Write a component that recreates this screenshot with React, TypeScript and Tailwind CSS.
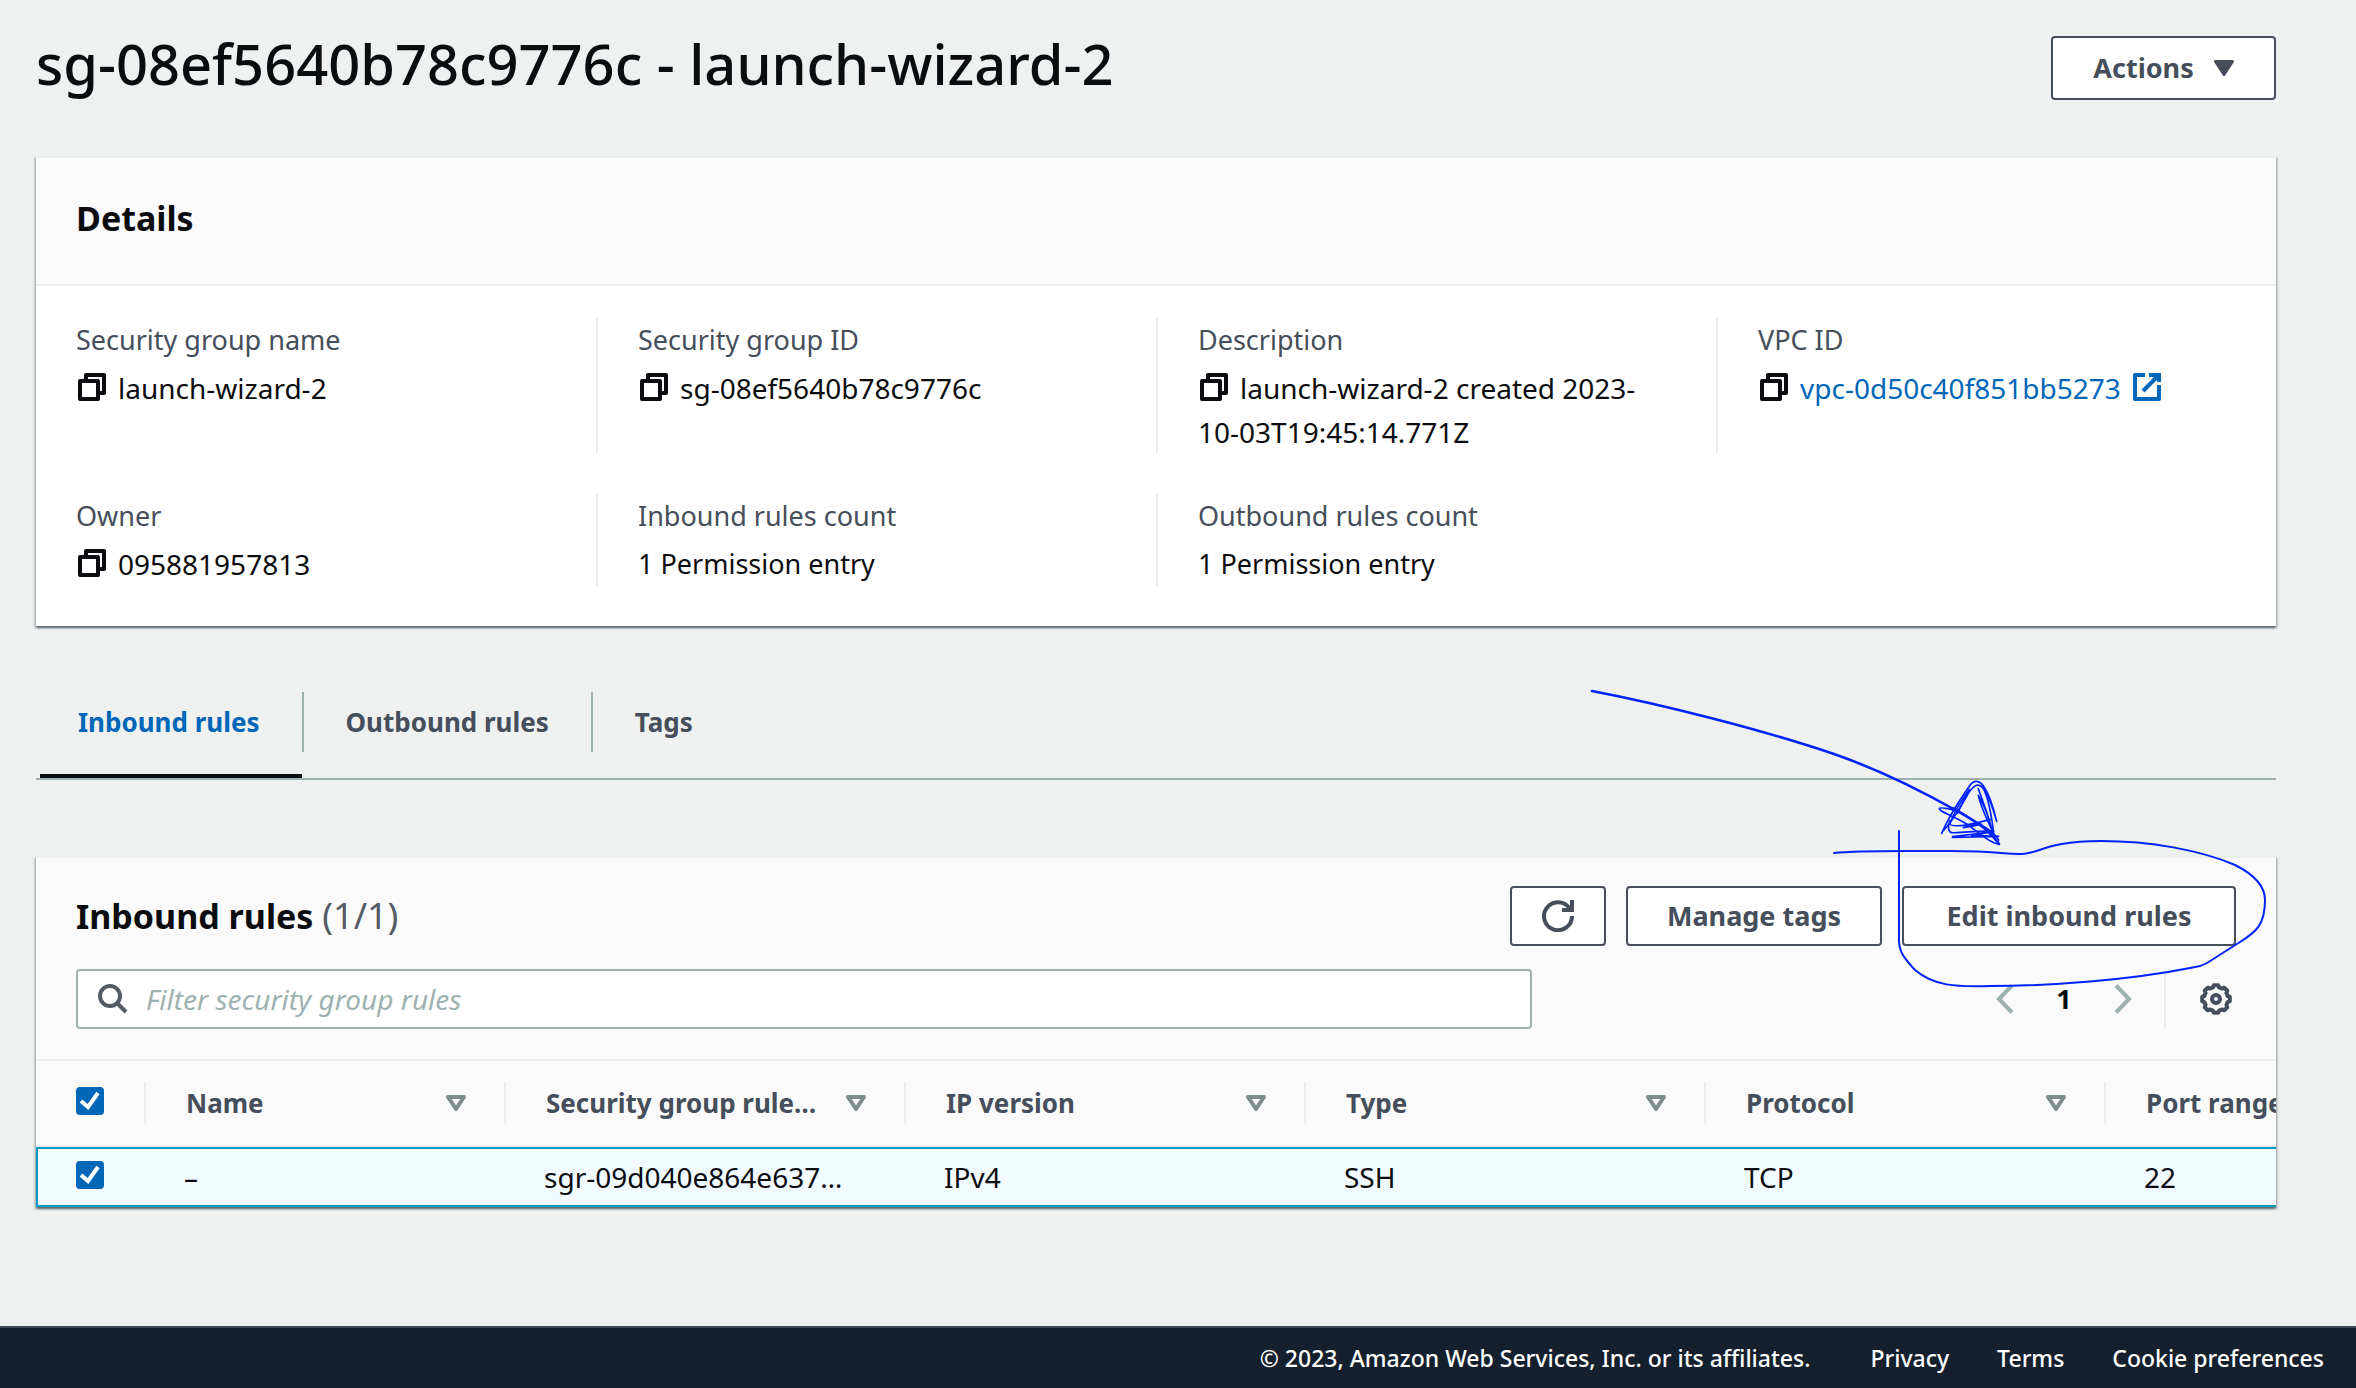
import type { ReactNode } from 'react';

function CopyIcon() {
  return (
    <svg viewBox="0 0 28 28" className="size-7" fill="none" stroke="currentColor" strokeWidth="4" strokeLinejoin="round" aria-hidden="true">
      <path d="M2 8H20V26H2Z" />
      <path d="M8 7V2H26V20H21" />
    </svg>
  );
}

function CopyButton({ label }: { label: string }) {
  return (
    <button type="button" aria-label={`Copy ${label}`} className="mr-3 ml-0.5 inline-block align-[-2px] text-[#0b0c0f]">
      <CopyIcon />
    </button>
  );
}

function ExternalIcon() {
  return (
    <svg viewBox="0 0 28 28" className="ml-3 inline-block size-7 align-[-2px]" fill="none" stroke="currentColor" strokeWidth="4" aria-hidden="true">
      <path d="M12 2H2V26H26V12" strokeLinejoin="round" />
      <path d="M16 2H26V9M10 18L26 2" />
    </svg>
  );
}

function RefreshIcon() {
  return (
    <svg viewBox="0 0 32 32" className="size-8" fill="none" stroke="currentColor" strokeWidth="4" aria-hidden="true">
      <path d="M30 16A14 14 0 1 1 27 7.500L28.500 9.500" />
      <path d="M30 0V10H20" />
    </svg>
  );
}

function SearchIcon() {
  return (
    <svg viewBox="0 0 30 30" className="size-[30px] shrink-0 text-[#545b64]" fill="none" stroke="currentColor" strokeWidth="4" aria-hidden="true">
      <circle cx="12" cy="12" r="10" />
      <path d="M19 19L28 28" />
    </svg>
  );
}

function Chevron({ side }: { side: 'left' | 'right' }) {
  return (
    <svg viewBox="0 0 18 30" className="h-[30px] w-[18px]" fill="none" stroke="currentColor" strokeWidth="4" aria-hidden="true">
      <path d={side === 'left' ? 'M16 1.500L3 15L16 28.500' : 'M2 1.500L15 15L2 28.500'} />
    </svg>
  );
}

const gearPath = (() => {
  const points: string[] = [];
  for (let i = 0; i < 8; i++) {
    for (const [offset, radius] of [[-9, 14], [9, 14], [15, 12], [30, 12]]) {
      const a = ((i * 45 + offset) * Math.PI) / 180;
      points.push(`${(16 + radius * Math.sin(a)).toFixed(2)} ${(16 - radius * Math.cos(a)).toFixed(2)}`);
    }
  }
  return `M${points.join('L')}Z`;
})();

function GearIcon() {
  return (
    <svg viewBox="0 0 32 32" className="size-8" fill="none" stroke="currentColor" strokeWidth="4" strokeLinejoin="round" aria-hidden="true">
      <path d={gearPath} />
      <circle cx="16" cy="16" r="4" />
    </svg>
  );
}

function SortIcon() {
  return (
    <svg viewBox="0 0 20 16" className="h-4 w-5 shrink-0 text-[#7d8c8c]" fill="none" stroke="currentColor" strokeWidth="4" strokeLinejoin="round" aria-hidden="true">
      <path d="M2 2H18L10 14Z" />
    </svg>
  );
}

function Button({ children, label, className }: { children: ReactNode; label?: string; className: string }) {
  return (
    <button
      type="button"
      aria-label={label}
      className={`flex items-center justify-center rounded-sm border-2 border-[#454e5a] bg-white text-[27px] leading-9 font-bold text-[#454e5a] ${className}`}
    >
      {children}
    </button>
  );
}

function Checkbox({ label }: { label: string }) {
  return (
    <label className="ml-10 grid size-7">
      <input
        type="checkbox"
        defaultChecked
        aria-label={label}
        className="peer col-start-1 row-start-1 size-7 appearance-none rounded-sm border-2 border-[#879596] bg-white checked:border-[#0066b8] checked:bg-[#0066b8]"
      />
      <svg viewBox="0 0 28 28" className="pointer-events-none invisible col-start-1 row-start-1 size-7 peer-checked:visible" fill="none" stroke="white" strokeWidth="4" aria-hidden="true">
        <path d="M5 14L12 20L22 6" />
      </svg>
    </label>
  );
}

function Detail({ label, copy, divided, children }: { label: string; copy?: boolean; divided?: boolean; children: ReactNode }) {
  return (
    <div className={`pr-12 pl-10 ${divided ? 'border-l-2 border-[#eaeded]' : ''}`}>
      <dt className="mb-1 text-[#454e5a]">{label}</dt>
      <dd className={`text-[#0b0c0f] ${copy ? 'text-[28px]' : ''}`}>
        {copy && <CopyButton label={label} />}
        {children}
      </dd>
    </div>
  );
}

function Annotation() {
  return (
    <svg
      viewBox="1582 686 700 310"
      className="pointer-events-none absolute -top-[200px] -left-80 z-10 h-[310px] w-[700px] max-w-none"
      fill="none"
      stroke="#0022ff"
      strokeLinecap="round"
      strokeLinejoin="round"
      aria-hidden="true"
    >
      <path strokeWidth="2.5" d="M1592 691C1660 704 1760 729 1834 754C1880 770 1920 790 1957 811" />
      <path strokeWidth="2" d="M1834 853C1860 850 1900 851 1950 851C2000 851 2008 855 2022 854C2040 853 2048 841 2101 841C2150 841 2200 850 2235 865C2255 875 2265 887 2265 900C2265 925 2256 932 2240 942L2207 963C2200 967 2196 967 2190 968C2130 980 2050 986 1990 986C1955 987 1934 986 1915 970C1903 957 1899 951 1899 940V831" />
      <g transform="translate(1900 770) scale(.33333)" strokeWidth="5">
        <path strokeWidth="8" d="M160 115C210 145 260 170 297 222" />
        <path d="M297 222C275 222 245 195 200 162C155 135 116 124 118 115C122 110 145 117 170 122C220 155 270 170 296 210" />
        <path d="M125 190C150 130 190 75 208 48C222 28 238 30 252 50C272 80 282 120 290 154C278 110 265 78 250 55C235 38 222 44 205 70C180 115 155 155 130 182" />
        <path d="M150 160C165 120 185 90 208 58L172 130" />
        <path d="M235 56C250 100 270 145 278 193C270 150 255 110 235 76C245 120 265 155 278 185M250 55C268 90 275 140 281 190" />
        <path d="M150 162C155 172 195 168 272 148M150 152C142 170 145 186 155 188C190 190 235 180 281 184M180 167L245 163L190 173M157 202L296 199L215 196L275 186L158 200" />
      </g>
    </svg>
  );
}

const tabs = ['Inbound rules', 'Outbound rules', 'Tags'];
const columns = ['Name', 'Security group rule…', 'IP version', 'Type', 'Protocol', 'Port range'];
const cells = ['–', 'sgr-09d040e864e637…', 'IPv4', 'SSH', 'TCP', '22'];
const cardClass =
  'border-t-2 border-[#eaeded] shadow-[0_2px_2px_0_rgba(0,28,36,0.5),2px_2px_2px_0_rgba(0,28,36,0.15),-2px_2px_2px_0_rgba(0,28,36,0.15)]';

export default function App() {
  return (
    <div className="flex min-h-screen flex-col bg-[#eff1f1] font-['Noto_Sans',sans-serif] text-[27px] leading-[44px] text-[#0b0c0f]">
      <main className="flex-1 pt-9 pr-20 pl-9">
        <header className="flex items-start justify-between">
          <h1 className="text-[56px] leading-[54px] font-medium">sg-08ef5640b78c9776c - launch-wizard-2</h1>
          <Button className="h-16 w-[225px] gap-5">
            Actions
            <svg viewBox="0 0 20 16" className="h-4 w-5" fill="currentColor" stroke="currentColor" strokeWidth="3" strokeLinejoin="round" aria-hidden="true">
              <path d="M1.500 1.500H18.500L10 14.500Z" />
            </svg>
          </Button>
        </header>

        <section className={`mt-14 bg-white ${cardClass}`}>
          <h2 className="border-b-2 border-[#eaeded] bg-[#fafafa] px-10 pt-[38px] pb-11 text-[34px] font-bold">Details</h2>
          <dl className="grid grid-cols-4 gap-y-10 pt-8 pb-10">
            <Detail label="Security group name" copy>launch-wizard-2</Detail>
            <Detail label="Security group ID" copy divided>sg-08ef5640b78c9776c</Detail>
            <Detail label="Description" copy divided>launch-wizard-2 created 2023-10-03T19:45:14.771Z</Detail>
            <Detail label="VPC ID" copy divided>
              <a href="#vpc" className="whitespace-nowrap text-[#0066b8]">
                vpc-0d50c40f851bb5273
                <ExternalIcon />
              </a>
            </Detail>
            <Detail label="Owner" copy>095881957813</Detail>
            <Detail label="Inbound rules count" divided>1 Permission entry</Detail>
            <Detail label="Outbound rules count" divided>1 Permission entry</Detail>
          </dl>
        </section>

        <nav role="tablist" aria-label="Security group" className="mt-[66px] flex border-b-2 border-[#9fb0b0] pl-1">
          {tabs.map((tab, i) => (
            <button
              key={tab}
              type="button"
              role="tab"
              aria-selected={i === 0}
              className={`flex flex-col text-[26px] font-bold ${i === 0 ? 'text-[#0066b8]' : 'text-[#454e5a]'}`}
            >
              <span className={`h-[60px] pt-2 ${i === 0 ? 'pr-[42px] pl-[38px]' : 'border-l-2 border-[#9fb0b0] px-[42px]'}`}>{tab}</span>
              <span className={`mt-[22px] h-1 w-full ${i === 0 ? 'bg-[#0b0c0f]' : ''}`} />
            </button>
          ))}
        </nav>

        <section className={`mt-[76px] bg-[#fafafa] ${cardClass}`}>
          <div className="px-10 pt-7 pb-[30px]">
            <div className="flex items-center justify-between">
              <h2 className="text-[34px] font-bold">
                Inbound rules <span className="text-[36px] font-normal text-[#545b64]">(1/1)</span>
              </h2>
              <div className="flex gap-5">
                <Button label="Refresh" className="h-[60px] px-[30px]"><RefreshIcon /></Button>
                <Button className="h-[60px] w-[256px]">Manage tags</Button>
                <div className="relative">
                  <Button className="h-[60px] w-[334px]">Edit inbound rules</Button>
                  <Annotation />
                </div>
              </div>
            </div>
            <div className="mt-[23px] flex items-center justify-between">
              <label className="flex h-[60px] w-full max-w-[1456px] items-center gap-[18px] rounded-sm border-2 border-[#9fb0b0] bg-white px-5">
                <SearchIcon />
                <input
                  type="text"
                  aria-label="Filter security group rules"
                  placeholder="Filter security group rules"
                  className="min-w-0 flex-1 bg-transparent text-[28px] outline-none placeholder:text-[#9fb0b0] placeholder:italic"
                />
              </label>
              <div className="flex h-[60px] items-center">
                <button type="button" aria-label="Previous page" className="text-[#9fb0b0]"><Chevron side="left" /></button>
                <button type="button" aria-current="page" className="w-[100px] text-center font-bold">1</button>
                <button type="button" aria-label="Next page" className="text-[#9fb0b0]"><Chevron side="right" /></button>
                <span className="ml-8 h-full border-l-2 border-[#eaeded]" />
                <button type="button" aria-label="Preferences" className="mr-1 ml-[34px] text-[#454e5a]"><GearIcon /></button>
              </div>
            </div>
          </div>

          <div className="overflow-hidden border-t-2 border-[#eaeded]">
            <table className="w-[2468px] table-fixed border-separate border-spacing-0 text-left">
              <colgroup>
                <col className="w-[108px]" />
                <col className="w-[360px]" />
                <col className="w-[400px]" />
                <col className="w-[400px]" />
                <col className="w-[400px]" />
                <col className="w-[400px]" />
                <col className="w-[400px]" />
              </colgroup>
              <thead>
                <tr>
                  <th className="h-[86px] border-b-2 border-[#eaeded] p-0 pb-1"><Checkbox label="Select all rules" /></th>
                  {columns.map((name) => (
                    <th key={name} className="h-[86px] border-b-2 border-[#eaeded] p-0 text-[26px] text-[#454e5a]">
                      <div className="flex h-[42px] items-center justify-between border-l-2 border-[#eaeded] pr-[38px] pl-10">
                        <span className="whitespace-nowrap">{name}</span>
                        <button type="button" aria-label={`Sort by ${name}`}><SortIcon /></button>
                      </div>
                    </th>
                  ))}
                </tr>
              </thead>
              <tbody>
                <tr className="bg-[#f1faff] text-[28px]">
                  <td className="h-[60px] border-y-2 border-l-2 border-[#0099c3] p-0 pb-1">
                    <div className="-ml-0.5"><Checkbox label="Select rule sgr-09d040e864e637" /></div>
                  </td>
                  {cells.map((text) => (
                    <td key={text} className="h-[60px] border-y-2 border-[#0099c3] py-0 pr-0 pl-10 whitespace-nowrap">{text}</td>
                  ))}
                </tr>
              </tbody>
            </table>
          </div>
        </section>
      </main>

      <footer className="flex justify-end gap-12 border-t-2 border-[#414b57] bg-[#14202e] pt-2 pr-8 pb-2 text-[23px] font-medium text-white">
        <span className="mr-3">© 2023, Amazon Web Services, Inc. or its affiliates.</span>
        <a href="#privacy">Privacy</a>
        <a href="#terms">Terms</a>
        <a href="#cookies">Cookie preferences</a>
      </footer>
    </div>
  );
}
